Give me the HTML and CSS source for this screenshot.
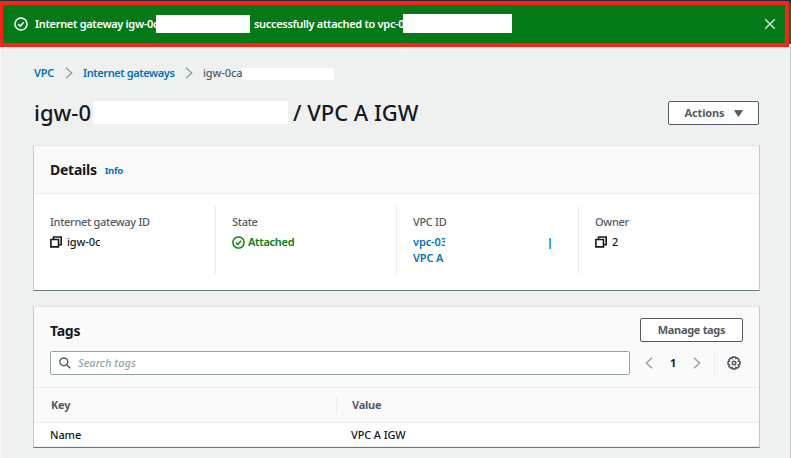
FILE: index.html
```html
<!DOCTYPE html>
<html lang="en">
<head>
<meta charset="utf-8">
<title>Internet gateway | VPC</title>
<link rel="stylesheet" href="styles.css">
</head>
<body>
<div class="flash-wrap">
  <div class="flash">
    <svg class="flash-icon" viewBox="0 0 16 16"><circle cx="8" cy="8" r="6.9"/><path d="M4.8 8.1l2.4 2.3 4-4.5"/></svg>
    <span class="flash-id">Internet gateway igw-0c</span><span class="mask mask-a"></span>
    <span class="flash-msg">successfully attached to vpc-0</span><span class="mask mask-b"></span>
    <svg class="close" viewBox="0 0 12 12"><path d="M1.2 1.2l9.6 9.6M10.8 1.2l-9.6 9.6"/></svg>
  </div>
</div>
<div class="page">
  <main class="content">
    <nav class="crumbs">
      <a class="crumb-vpc">VPC</a>
      <svg class="sep" viewBox="0 0 8 12"><path d="M1 .8L6.6 6 1 11.2"/></svg>
      <a class="crumb-igw">Internet gateways</a>
      <svg class="sep" viewBox="0 0 8 12"><path d="M1 .8L6.6 6 1 11.2"/></svg>
      <span class="crumb-id">igw-0ca</span><span class="mask mask-c"></span>
    </nav>
    <div class="title-row">
      <h1><span class="title-id">igw-0</span><span class="mask mask-d"></span><span class="title-name">/ VPC A IGW</span></h1>
      <button class="btn actions">Actions <svg viewBox="0 0 10 8"><path d="M.6.6h8.8L5 7.4z"/></svg></button>
    </div>
    <section class="card details">
      <header><h2>Details</h2><a class="info">Info</a></header>
      <div class="cols">
        <div class="col"><div class="label">Internet gateway ID</div>
          <div class="value"><svg class="copy" viewBox="0 0 12 12"><path d="M3.5 3V1h7.7v7.7H9M.9 3.5h7.6v7.4H.9z"/></svg><span class="short-id">igw-0c</span></div></div>
        <div class="col"><div class="label">State</div>
          <div class="value ok"><svg class="check" viewBox="0 0 16 16"><circle cx="8" cy="8" r="6.9"/><path d="M4.8 8.1l2.4 2.3 4-4.5"/></svg><span>Attached</span></div></div>
        <div class="col"><div class="label">VPC ID</div>
          <div class="value link"><span class="vpc-id">vpc-03</span><span class="bar">|</span></div><div class="value link">VPC A</div></div>
        <div class="col"><div class="label">Owner</div>
          <div class="value"><svg class="copy" viewBox="0 0 12 12"><path d="M3.5 3V1h7.7v7.7H9M.9 3.5h7.6v7.4H.9z"/></svg><span>2</span></div></div>
      </div>
    </section>
    <section class="card tags">
      <div class="tags-head">
        <div class="tags-title"><h2>Tags</h2><button class="btn manage">Manage tags</button></div>
        <div class="tools">
          <div class="search"><svg viewBox="0 0 12 12"><circle cx="4.8" cy="4.8" r="3.9"/><path d="M7.7 7.7l3.6 3.6"/></svg><span>Search tags</span></div>
          <svg class="sep prev" viewBox="0 0 8 12"><path d="M7 .8L1.4 6 7 11.2"/></svg>
          <b class="page-no">1</b>
          <svg class="sep next" viewBox="0 0 8 12"><path d="M1 .8L6.6 6 1 11.2"/></svg>
          <div class="gear"><svg viewBox="0 0 16 16"><path d="M6.4 1.3h3.2l.5 1.6 1.6-.7 2.2 2.2-.8 1.5 1.6.5v3.2l-1.6.5.8 1.6-2.2 2.2-1.6-.8-.5 1.6H6.4l-.5-1.6-1.6.8-2.2-2.2.8-1.6-1.6-.5V6.4l1.6-.5-.8-1.5 2.2-2.2 1.6.7z"/><circle cx="8" cy="8" r="2"/></svg></div>
        </div>
      </div>
      <div class="row thead"><div class="key">Key</div><div class="val">Value</div></div>
      <div class="row tbody"><div class="key">Name</div><div class="val">VPC A IGW</div></div>
    </section>
  </main>
</div>
</body>
</html>
```
FILE: styles.css
```css
* { box-sizing: border-box; }
body { margin: 0; height: 458px; overflow: hidden; background: #eff1f1; color: #16191f; font: 500 11px/16px "Noto Sans", sans-serif; letter-spacing: -.12px; }
svg { display: block; fill: none; stroke: currentColor; flex: none; }
h1, h2 { margin: 0; }
span, a, b { white-space: nowrap; }
.flash-wrap { height: 47px; padding-top: 1px; background: linear-gradient(#232f3e 3px, #007a14 3px, #007a14 44px, #eff1f1 44px); }
.flash { width: 789px; height: 46px; border: 4px solid #fe2019; border-left-width: 3px; background: #037a17; color: #fff; display: flex; align-items: center; font-weight: 600; letter-spacing: -.32px; }
.flash-icon { width: 14px; height: 14px; margin: 0 7px 0 11px; stroke-width: 1.8; }
.flash-id { width: 121px; overflow: hidden; }
.mask { background: #fff; flex: none; }
.mask-a { width: 94px; height: 18px; margin: -1px 4px 0 0; }
.flash-msg { width: 149px; overflow: hidden; }
.mask-b { width: 109px; height: 19px; margin-top: -1px; }
.close { width: 12px; height: 12px; margin-left: auto; margin-right: 9px; stroke-width: 1.4; color: #d7eeda; }
.page { height: 411px; border-left: 1px solid #fafafa; border-right: 1px solid #c4cbca; }
.content { padding: 18px 31px 0 32px; }
.crumbs { display: flex; align-items: center; height: 16px; color: #545b64; }
.crumbs a, .link, .info { color: #0073bb; font-weight: 600; }
.crumb-vpc { width: 32px; padding-left: 1px; letter-spacing: -.2px; }
.sep { width: 8px; height: 12px; color: #95a5a6; stroke-width: 1.5; }
.crumbs .crumb-igw { width: 112px; padding-left: 10px; letter-spacing: -.42px; }
.crumb-id { width: 49px; padding-left: 10px; overflow: hidden; }
.mask-c { width: 92px; height: 12px; margin-top: 1px; }
.title-row { height: 64px; display: flex; justify-content: space-between; align-items: center; }
h1 { display: flex; align-items: center; font-size: 22px; line-height: 30px; font-weight: 500; padding-left: 1px; }
.title-id { width: 59px; letter-spacing: 0; }
.title-name { letter-spacing: 0; }
.mask-d { width: 195px; height: 23px; margin: -2px 5px 0 0; }
h1 .title-id, h1 .title-name { margin-top: -2px; }
.btn { height: 24px; border: 1px solid #545b64; border-radius: 2px; background: #fff; color: #545b64; font: 700 11px/16px "Noto Sans", sans-serif; padding: 0; display: flex; align-items: center; justify-content: center; letter-spacing: -.12px; }
.actions { width: 91px; gap: 9px; }
.actions svg { width: 9px; height: 7px; fill: #545b64; }
.card { width: 727px; background: #fff; border: 1px solid #c3cccd; border-top-color: #e3e7e7; border-bottom-color: #687b7c; }
.details { height: 146px; }
.details header { height: 48px; padding: 0 16px; display: flex; align-items: center; gap: 8px; background: #fafafa; border-bottom: 1px solid #eaeded; }
h2 { font-size: 14px; line-height: 20px; font-weight: 700; letter-spacing: -.25px; }
.info { font-size: 9.5px; font-weight: 700; padding-top: 2px; letter-spacing: -.3px; }
.info { font-weight: 700; }
.cols { display: grid; grid-template-columns: 182px 181px 182px 180px; padding-top: 12px; }
.col { height: 68px; padding: 8px 0 0 16px; border-right: 1px solid #eaeded; }
.col:last-child { border: 0; }
.label { color: #545b64; margin-bottom: 4px; letter-spacing: -.3px; }
.value { height: 16px; display: flex; align-items: center; }
.copy { width: 12px; height: 12px; margin-right: 5px; stroke-width: 1.6; }
.short-id { width: 33px; overflow: hidden; }
.ok { color: #037f0c; font-weight: 600; letter-spacing: -.3px; }
.check { width: 13px; height: 13px; margin-right: 3px; stroke-width: 1.8; }
.vpc-id { width: 32px; overflow: hidden; }
.bar { margin-left: 102px; font-weight: 800; }
.tags { height: 142px; margin-top: 15px; }
.tags-head { height: 81px; padding: 11px 16px 0; background: #fafafa; border-bottom: 1px solid #eaeded; }
.tags-title { display: flex; justify-content: space-between; align-items: center; height: 24px; }
.tags-title h2 { padding-top: 2px; }
.manage { width: 103px; letter-spacing: -.32px; }
.tools { display: flex; align-items: center; margin-top: 8px; height: 26px; }
.search { width: 580px; height: 24px; border: 1px solid #95a5a6; border-radius: 2px; background: #fff; display: flex; align-items: center; padding-left: 8px; gap: 7px; color: #95a5a6; font-style: italic; letter-spacing: 0; }
.search svg { width: 12px; height: 12px; color: #545b64; stroke-width: 1.5; }
.prev { margin-left: 15px; }
.page-no { width: 40px; text-align: center; }
.gear { height: 25px; margin-left: 13px; padding: 5px 0 0 12px; border-left: 1px solid #eaeded; color: #545b64; }
.gear svg { width: 14px; height: 14px; stroke-width: 1.8; }
.row { display: flex; align-items: center; }
.thead { height: 35px; background: #fafafa; border-bottom: 1px solid #eaeded; color: #545b64; font-weight: 700; letter-spacing: -.25px; }
.tbody { height: 24px; border-bottom: 1px solid #eaeded; }
.key { width: 302px; padding-left: 16px; }
.val { padding-left: 15px; }
.thead .key { height: 17px; padding-left: 17px; border-right: 1px solid #eaeded; width: 303px; }
```
